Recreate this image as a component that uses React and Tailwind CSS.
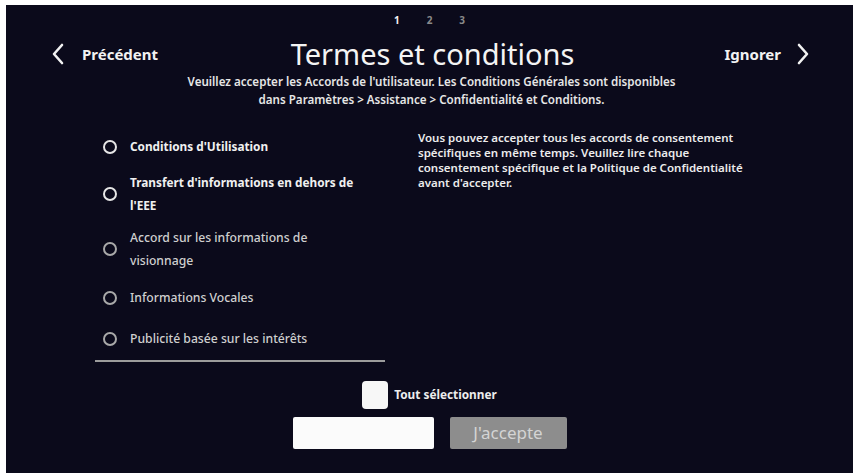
import React from "react";

const font = { fontFamily: '"Noto Sans", "Open Sans", Arial, sans-serif' };

function Chevron({ dir }) {
  return (
    <svg width="14" height="22" viewBox="0 0 14 22" fill="none">
      {dir === "left" ? (
        <polyline points="11,2 3,11 11,20" stroke="#f2f2f2" strokeWidth="2.6" strokeLinecap="round" strokeLinejoin="round" />
      ) : (
        <polyline points="3,2 11,11 3,20" stroke="#f2f2f2" strokeWidth="2.6" strokeLinecap="round" strokeLinejoin="round" />
      )}
    </svg>
  );
}

function Item({ lines, strong, className = "" }) {
  return (
    <div className={`flex items-center gap-[7px] pl-[8px] ${className}`}>
      <span
        className={`w-[14px] h-[14px] shrink-0 rounded-full border-2 ${
          strong ? "border-[#e6e6e6]" : "border-[#a9a9a9]"
        }`}
      />
      <div
        className={`pl-[6px] leading-[23px] ${
          strong ? "text-[11.8px] font-bold text-[#f0f0f0]" : "text-[12.2px] font-medium text-[#cfcfcf]"
        }`}
      >
        {lines.map((l, i) => (
          <div key={i}>{l}</div>
        ))}
      </div>
    </div>
  );
}

export default function App() {
  return (
    <div className="w-[856px] h-[473px] bg-white overflow-hidden" style={font}>
      <div className="ml-[6px] mt-[5px] w-[847px] h-[468px] bg-[#0b0a1b] flex flex-col pt-[9px]">
        {/* step numbers */}
        <div className="flex justify-center gap-[27px] text-[10px] leading-[12px] font-bold">
          <span className="text-[#f4f4f4]">1</span>
          <span className="text-[#8a8a8a]">2</span>
          <span className="text-[#8a8a8a]">3</span>
        </div>

        {/* header */}
        <div className="mt-[10px] grid grid-cols-[1fr_auto_1fr] items-center h-[36px]">
          <div className="flex items-center pl-[45px] gap-[17px]">
            <Chevron dir="left" />
            <span className="text-[15px] font-bold text-[#f2f2f2]">Précédent</span>
          </div>
          <div className="text-[29px] leading-[36px] text-[#f4f4f4] pl-[6px]">Termes et conditions</div>
          <div className="flex items-center justify-end pr-[43px] gap-[15px]">
            <span className="text-[15px] font-bold text-[#f2f2f2]">Ignorer</span>
            <Chevron dir="right" />
          </div>
        </div>

        {/* subtitle */}
        <div className="mt-[1px] text-center text-[11.6px] leading-[18px] font-semibold text-[#e6e6e6] pl-[4px]">
          Veuillez accepter les Accords de l'utilisateur. Les Conditions Générales sont disponibles
          <br />
          dans Paramètres &gt; Assistance &gt; Confidentialité et Conditions.
        </div>

        {/* content */}
        <div className="mt-[21px] flex">
          <div className="ml-[89px] w-[290px] pt-[5px] flex flex-col">
            <Item strong lines={["Conditions d'Utilisation"]} />
            <Item strong className="mt-[13px]" lines={["Transfert d'informations en dehors de", "l'EEE"]} />
            <Item className="mt-[9px]" lines={["Accord sur les informations de", "visionnage"]} />
            <Item className="mt-[14px]" lines={["Informations Vocales"]} />
            <Item className="mt-[18px]" lines={["Publicité basée sur les intérêts"]} />
            <div className="mt-[10px] h-[2px] bg-[#9c9c9c]" />
          </div>
          <div className="ml-[33px] text-[11.5px] leading-[15px] font-semibold text-[#ececec]">
            Vous pouvez accepter tous les accords de consentement
            <br />
            spécifiques en même temps. Veuillez lire chaque
            <br />
            consentement spécifique et la Politique de Confidentialité
            <br />
            avant d'accepter.
          </div>
        </div>

        {/* select all */}
        <div className="mt-[19px] flex justify-center items-center gap-[6px]">
          <span className="w-[26px] h-[28px] rounded-[4px] bg-[#f7f7f7]" />
          <span className="text-[11.8px] font-bold text-[#ededed]">Tout sélectionner</span>
        </div>

        {/* buttons */}
        <div className="mt-[8px] flex justify-center gap-[16px]">
          <div className="w-[141px] h-[32px] rounded-[2px] bg-[#fbfbfb]" />
          <div className="w-[117px] h-[32px] rounded-[2px] bg-[#8d8d8d] flex items-center justify-center text-[17px] text-[#d4d4d4]">
            J'accepte
          </div>
        </div>
      </div>
    </div>
  );
}
